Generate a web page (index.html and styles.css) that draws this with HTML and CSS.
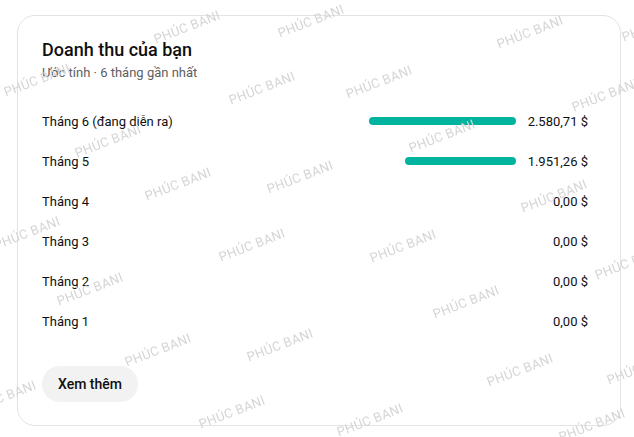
FILE: index.html
```html
<!DOCTYPE html>
<html lang="vi">
<head>
  <meta charset="UTF-8" />
  <meta name="viewport" content="width=device-width, initial-scale=1.0"/>
  <title>Doanh thu của bạn</title>
  <link rel="stylesheet" href="styles.css">
</head>
<body>

<section class="card">
  <h2 class="title">Doanh thu của bạn</h2>
  <p class="subtitle">Ước tính · 6 tháng gần nhất</p>

  <div class="rows">
    <div class="row">
      <span class="label">Tháng 6 (đang diễn ra)</span>
      <span class="track"><span class="bar" style="width:100%"></span></span>
      <span class="amount">2.580,71 $</span>
    </div>
    <div class="row">
      <span class="label">Tháng 5</span>
      <span class="track"><span class="bar" style="width:75.6%"></span></span>
      <span class="amount">1.951,26 $</span>
    </div>
    <div class="row">
      <span class="label">Tháng 4</span>
      <span class="track"></span>
      <span class="amount">0,00 $</span>
    </div>
    <div class="row">
      <span class="label">Tháng 3</span>
      <span class="track"></span>
      <span class="amount">0,00 $</span>
    </div>
    <div class="row">
      <span class="label">Tháng 2</span>
      <span class="track"></span>
      <span class="amount">0,00 $</span>
    </div>
    <div class="row">
      <span class="label">Tháng 1</span>
      <span class="track"></span>
      <span class="amount">0,00 $</span>
    </div>
  </div>

  <button class="more">Xem thêm</button>
</section>

<!-- watermark overlay -->
<div class="watermark">
  <span style="left:187px;top:27px">PHÚC BANI</span>
  <span style="left:311px;top:21px">PHÚC BANI</span>
  <span style="left:530px;top:32px">PHÚC BANI</span>
  <span style="left:655px;top:25px">PHÚC BANI</span>
  <span style="left:37px;top:80px">PHÚC BANI</span>
  <span style="left:262px;top:88px">PHÚC BANI</span>
  <span style="left:379px;top:82px">PHÚC BANI</span>
  <span style="left:605px;top:95px">PHÚC BANI</span>
  <span style="left:108px;top:141px">PHÚC BANI</span>
  <span style="left:442px;top:136px">PHÚC BANI</span>
  <span style="left:178px;top:184px">PHÚC BANI</span>
  <span style="left:300px;top:177px">PHÚC BANI</span>
  <span style="left:554px;top:196px">PHÚC BANI</span>
  <span style="left:27px;top:233px">PHÚC BANI</span>
  <span style="left:252px;top:245px">PHÚC BANI</span>
  <span style="left:403px;top:246px">PHÚC BANI</span>
  <span style="left:628px;top:263px">PHÚC BANI</span>
  <span style="left:90px;top:289px">PHÚC BANI</span>
  <span style="left:466px;top:302px">PHÚC BANI</span>
  <span style="left:158px;top:350px">PHÚC BANI</span>
  <span style="left:280px;top:345px">PHÚC BANI</span>
  <span style="left:520px;top:370px">PHÚC BANI</span>
  <span style="left:640px;top:368px">PHÚC BANI</span>
  <span style="left:3px;top:397px">PHÚC BANI</span>
  <span style="left:232px;top:412px">PHÚC BANI</span>
  <span style="left:370px;top:420px">PHÚC BANI</span>
  <span style="left:592px;top:425px">PHÚC BANI</span>
</div>

</body>
</html>
```

FILE: styles.css
```css
body { margin: 0; font-family: Roboto, 'Liberation Sans', sans-serif; background: #fff; color: #0f0f0f; overflow: hidden; }

.card {
  box-sizing: border-box; width: 604px; margin: 15px 0 0 17px;
  border: 1px solid #e3e3e3; border-radius: 18px; padding: 22px 32px 23px 24px;
}
.title { margin: 0; font-size: 18px; line-height: 24px; font-weight: 500; }
.subtitle { margin: 2px 0 0; font-size: 13px; line-height: 18px; color: #606060; }

.rows { margin-top: 19px; }
.row { display: flex; align-items: center; height: 40px; font-size: 13px; }
.label { flex: 1; }
.track { width: 147px; display: flex; justify-content: flex-end; }
.bar { height: 8px; border-radius: 4px; background: #00b39e; }
.amount { width: 72px; text-align: right; }

.more {
  margin-top: 25px; height: 36px; padding: 0 16px; border: none; border-radius: 18px;
  background: #f2f2f2; color: #0f0f0f; font-family: inherit; font-size: 14px; font-weight: 500; cursor: pointer;
}

.watermark { position: fixed; inset: 0; pointer-events: none; }
.watermark span {
  position: absolute; transform: translate(-50%, -50%) rotate(-21deg);
  font-size: 13px; color: #d5d5d5; white-space: nowrap; letter-spacing: 0.3px;
}
```
